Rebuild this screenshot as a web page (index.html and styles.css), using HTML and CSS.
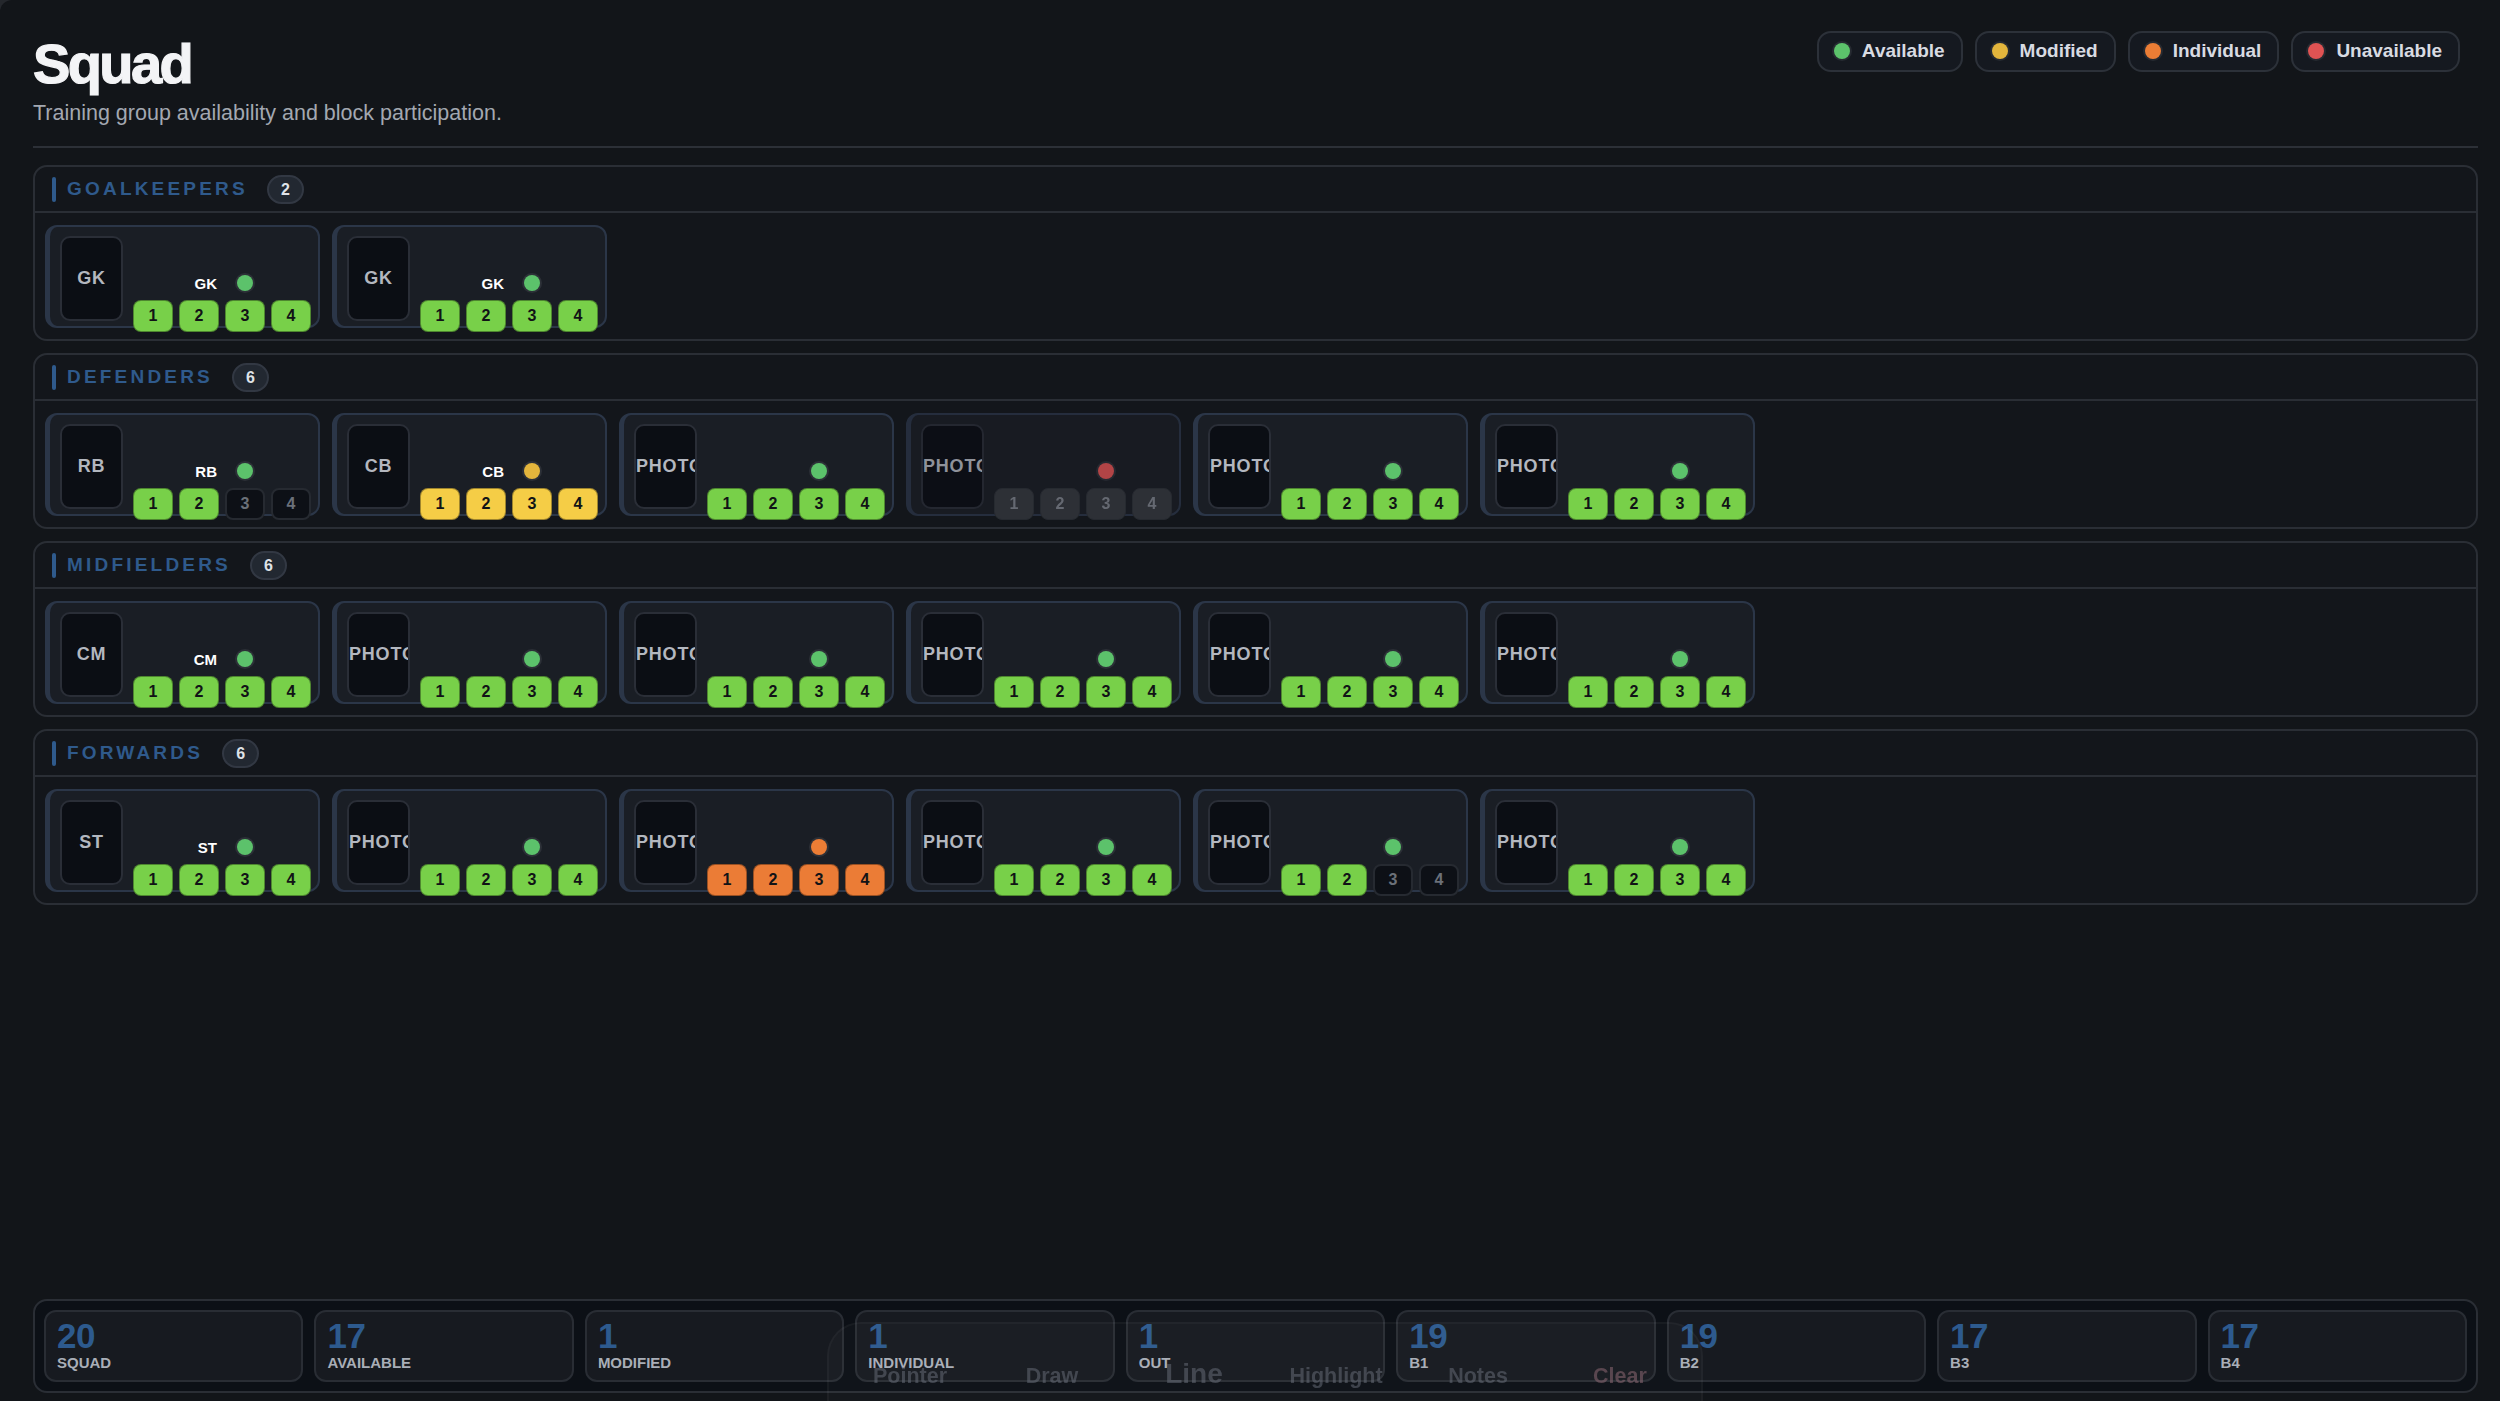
FILE: index.html
```html
<!DOCTYPE html>
<html lang="en">
<head>
    <meta charset="UTF-8">
    <meta name="viewport" content="width=device-width, initial-scale=1.0">
    <title>Squad</title>
    <link rel="stylesheet" href="styles.css">
</head>
<body>
    <div class="app">
        <div class="header">
            <div class="header-text">
                <h1>Squad</h1>
                <p class="subtitle">Training group availability and block participation.</p>
            </div>
            <div class="legend">
                <span class="pill"><span class="dot green"></span>Available</span>
                <span class="pill"><span class="dot yellow"></span>Modified</span>
                <span class="pill"><span class="dot orange"></span>Individual</span>
                <span class="pill"><span class="dot red"></span>Unavailable</span>
            </div>
        </div>

        <div class="groups">
            <div class="group">
                <div class="group-head"><span class="bar"></span><span class="group-title">Goalkeepers</span><span class="count">2</span></div>
                <div class="group-body">
                    <div class="player">
                        <div class="photo">GK</div>
                        <div class="info">
                            <div class="info-top"><span class="pos">GK</span><span class="dot green"></span></div>
                            <div class="blocks"><span class="blk g">1</span><span class="blk g">2</span><span class="blk g">3</span><span class="blk g">4</span></div>
                        </div>
                    </div>
                    <div class="player">
                        <div class="photo">GK</div>
                        <div class="info">
                            <div class="info-top"><span class="pos">GK</span><span class="dot green"></span></div>
                            <div class="blocks"><span class="blk g">1</span><span class="blk g">2</span><span class="blk g">3</span><span class="blk g">4</span></div>
                        </div>
                    </div>
                </div>
            </div>

            <div class="group">
                <div class="group-head"><span class="bar"></span><span class="group-title">Defenders</span><span class="count">6</span></div>
                <div class="group-body">
                    <div class="player">
                        <div class="photo">RB</div>
                        <div class="info">
                            <div class="info-top"><span class="pos">RB</span><span class="dot green"></span></div>
                            <div class="blocks"><span class="blk g">1</span><span class="blk g">2</span><span class="blk off">3</span><span class="blk off">4</span></div>
                        </div>
                    </div>
                    <div class="player">
                        <div class="photo">CB</div>
                        <div class="info">
                            <div class="info-top"><span class="pos">CB</span><span class="dot yellow"></span></div>
                            <div class="blocks"><span class="blk y">1</span><span class="blk y">2</span><span class="blk y">3</span><span class="blk y">4</span></div>
                        </div>
                    </div>
                    <div class="player">
                        <div class="photo">PHOTO</div>
                        <div class="info">
                            <div class="info-top"><span class="dot green"></span></div>
                            <div class="blocks"><span class="blk g">1</span><span class="blk g">2</span><span class="blk g">3</span><span class="blk g">4</span></div>
                        </div>
                    </div>
                    <div class="player out">
                        <div class="photo">PHOTO</div>
                        <div class="info">
                            <div class="info-top"><span class="dot red"></span></div>
                            <div class="blocks"><span class="blk na">1</span><span class="blk na">2</span><span class="blk na">3</span><span class="blk na">4</span></div>
                        </div>
                    </div>
                    <div class="player">
                        <div class="photo">PHOTO</div>
                        <div class="info">
                            <div class="info-top"><span class="dot green"></span></div>
                            <div class="blocks"><span class="blk g">1</span><span class="blk g">2</span><span class="blk g">3</span><span class="blk g">4</span></div>
                        </div>
                    </div>
                    <div class="player">
                        <div class="photo">PHOTO</div>
                        <div class="info">
                            <div class="info-top"><span class="dot green"></span></div>
                            <div class="blocks"><span class="blk g">1</span><span class="blk g">2</span><span class="blk g">3</span><span class="blk g">4</span></div>
                        </div>
                    </div>
                </div>
            </div>

            <div class="group">
                <div class="group-head"><span class="bar"></span><span class="group-title">Midfielders</span><span class="count">6</span></div>
                <div class="group-body">
                    <div class="player">
                        <div class="photo">CM</div>
                        <div class="info">
                            <div class="info-top"><span class="pos">CM</span><span class="dot green"></span></div>
                            <div class="blocks"><span class="blk g">1</span><span class="blk g">2</span><span class="blk g">3</span><span class="blk g">4</span></div>
                        </div>
                    </div>
                    <div class="player">
                        <div class="photo">PHOTO</div>
                        <div class="info">
                            <div class="info-top"><span class="dot green"></span></div>
                            <div class="blocks"><span class="blk g">1</span><span class="blk g">2</span><span class="blk g">3</span><span class="blk g">4</span></div>
                        </div>
                    </div>
                    <div class="player">
                        <div class="photo">PHOTO</div>
                        <div class="info">
                            <div class="info-top"><span class="dot green"></span></div>
                            <div class="blocks"><span class="blk g">1</span><span class="blk g">2</span><span class="blk g">3</span><span class="blk g">4</span></div>
                        </div>
                    </div>
                    <div class="player">
                        <div class="photo">PHOTO</div>
                        <div class="info">
                            <div class="info-top"><span class="dot green"></span></div>
                            <div class="blocks"><span class="blk g">1</span><span class="blk g">2</span><span class="blk g">3</span><span class="blk g">4</span></div>
                        </div>
                    </div>
                    <div class="player">
                        <div class="photo">PHOTO</div>
                        <div class="info">
                            <div class="info-top"><span class="dot green"></span></div>
                            <div class="blocks"><span class="blk g">1</span><span class="blk g">2</span><span class="blk g">3</span><span class="blk g">4</span></div>
                        </div>
                    </div>
                    <div class="player">
                        <div class="photo">PHOTO</div>
                        <div class="info">
                            <div class="info-top"><span class="dot green"></span></div>
                            <div class="blocks"><span class="blk g">1</span><span class="blk g">2</span><span class="blk g">3</span><span class="blk g">4</span></div>
                        </div>
                    </div>
                </div>
            </div>

            <div class="group">
                <div class="group-head"><span class="bar"></span><span class="group-title">Forwards</span><span class="count">6</span></div>
                <div class="group-body">
                    <div class="player">
                        <div class="photo">ST</div>
                        <div class="info">
                            <div class="info-top"><span class="pos">ST</span><span class="dot green"></span></div>
                            <div class="blocks"><span class="blk g">1</span><span class="blk g">2</span><span class="blk g">3</span><span class="blk g">4</span></div>
                        </div>
                    </div>
                    <div class="player">
                        <div class="photo">PHOTO</div>
                        <div class="info">
                            <div class="info-top"><span class="dot green"></span></div>
                            <div class="blocks"><span class="blk g">1</span><span class="blk g">2</span><span class="blk g">3</span><span class="blk g">4</span></div>
                        </div>
                    </div>
                    <div class="player">
                        <div class="photo">PHOTO</div>
                        <div class="info">
                            <div class="info-top"><span class="dot orange"></span></div>
                            <div class="blocks"><span class="blk o">1</span><span class="blk o">2</span><span class="blk o">3</span><span class="blk o">4</span></div>
                        </div>
                    </div>
                    <div class="player">
                        <div class="photo">PHOTO</div>
                        <div class="info">
                            <div class="info-top"><span class="dot green"></span></div>
                            <div class="blocks"><span class="blk g">1</span><span class="blk g">2</span><span class="blk g">3</span><span class="blk g">4</span></div>
                        </div>
                    </div>
                    <div class="player">
                        <div class="photo">PHOTO</div>
                        <div class="info">
                            <div class="info-top"><span class="dot green"></span></div>
                            <div class="blocks"><span class="blk g">1</span><span class="blk g">2</span><span class="blk off">3</span><span class="blk off">4</span></div>
                        </div>
                    </div>
                    <div class="player">
                        <div class="photo">PHOTO</div>
                        <div class="info">
                            <div class="info-top"><span class="dot green"></span></div>
                            <div class="blocks"><span class="blk g">1</span><span class="blk g">2</span><span class="blk g">3</span><span class="blk g">4</span></div>
                        </div>
                    </div>
                </div>
            </div>
        </div>

        <div class="stats">
            <div class="stat"><div class="num">20</div><div class="lbl">Squad</div></div>
            <div class="stat"><div class="num">17</div><div class="lbl">Available</div></div>
            <div class="stat"><div class="num">1</div><div class="lbl">Modified</div></div>
            <div class="stat"><div class="num">1</div><div class="lbl">Individual</div></div>
            <div class="stat"><div class="num">1</div><div class="lbl">Out</div></div>
            <div class="stat"><div class="num">19</div><div class="lbl">B1</div></div>
            <div class="stat"><div class="num">19</div><div class="lbl">B2</div></div>
            <div class="stat"><div class="num">17</div><div class="lbl">B3</div></div>
            <div class="stat"><div class="num">17</div><div class="lbl">B4</div></div>
        </div>
    </div>

    <div class="toolbar">
        <span class="tool">Pointer</span>
        <span class="tool">Draw</span>
        <span class="tool big">Line</span>
        <span class="tool">Highlight</span>
        <span class="tool">Notes</span>
        <span class="tool clear">Clear</span>
    </div>
</body>
</html>
```

FILE: styles.css
```css
body {
    margin: 0;
    background: #24272c;
    font-family: "Liberation Sans", Arial, sans-serif;
    color: #d7dae0;
}
.app {
    min-height: 100vh;
    box-sizing: border-box;
    padding: 31px 22px 8px 33px;
    background: #121519;
    border-top-left-radius: 12px;
    display: flex;
    flex-direction: column;
}
.header {
    display: flex;
    justify-content: space-between;
    align-items: flex-start;
    padding: 0 18px 20px 0;
    border-bottom: 2px solid #2c3037;
}
h1 {
    margin: 5px 0 0;
    font-size: 56px;
    line-height: 56px;
    font-weight: 700;
    letter-spacing: -2.6px;
    color: #f3f4f6;
    -webkit-text-stroke: 1.2px #f3f4f6;
}
.subtitle {
    margin: 8px 0 0;
    font-size: 21.5px;
    line-height: 26px;
    color: #a3a8b1;
}
.legend {
    display: flex;
    gap: 12px;
}
.pill {
    display: flex;
    align-items: center;
    padding: 7px 16px 8px 15px;
    border: 2px solid #2c3139;
    border-radius: 14px;
    background: #151920;
    font-size: 19px;
    line-height: 22px;
    font-weight: 700;
    color: #d8dbe2;
}
.pill .dot {
    margin-right: 12px;
}
.dot {
    display: inline-block;
    width: 16px;
    height: 16px;
    border-radius: 50%;
    box-shadow: 0 0 0 2px #262a31;
}
.green { background: #5cc26b; }
.yellow { background: #e3b53c; }
.orange { background: #eb7d35; }
.red { background: #e05353; }

.groups {
    margin-top: 17px;
    display: flex;
    flex-direction: column;
    gap: 12px;
}
.group {
    border: 2px solid #2a2e35;
    border-radius: 14px;
    background: #13161b;
}
.group-head {
    display: flex;
    align-items: center;
    height: 44px;
    padding-left: 17px;
    border-bottom: 2px solid #2a2e35;
}
.bar {
    width: 4px;
    height: 25px;
    border-radius: 2px;
    background: #2f5a8c;
}
.group-title {
    margin-left: 11px;
    font-size: 19px;
    font-weight: 700;
    letter-spacing: 3.2px;
    text-transform: uppercase;
    color: #2f5a8c;
}
.count {
    margin-left: 19px;
    min-width: 33px;
    height: 25px;
    box-sizing: content-box;
    border: 2px solid #323843;
    border-radius: 15px;
    background: #222831;
    font-size: 16px;
    font-weight: 700;
    line-height: 25px;
    text-align: center;
    color: #dfe2e7;
}
.group-body {
    display: flex;
    gap: 12px;
    padding: 12px 10px 11px;
}

.player {
    width: 275px;
    height: 103px;
    box-sizing: border-box;
    display: flex;
    align-items: flex-start;
    gap: 10px;
    padding: 9px 10px;
    border: 2px solid #2b3648;
    border-left-width: 5px;
    border-radius: 12px;
    background: #1a1e25;
}
.player.out {
    opacity: 0.78;
}
.photo {
    width: 59px;
    height: 81px;
    flex: none;
    border: 2px solid #2a2e37;
    border-radius: 10px;
    background: #0b0e14;
    overflow: hidden;
    white-space: nowrap;
    text-align: center;
    font-size: 18px;
    font-weight: 700;
    letter-spacing: 0.8px;
    line-height: 81px;
    color: #b3b7bf;
}
.info {
    margin-top: 37px;
    width: 178px;
}
.info-top {
    display: flex;
    justify-content: flex-end;
    align-items: center;
    height: 20px;
    padding-right: 58px;
}
.pos {
    margin-right: 20px;
    font-size: 15px;
    font-weight: 700;
    color: #ffffff;
}
.info-top .dot {
    box-shadow: 0 0 0 2px #2c3037;
}
.blocks {
    display: flex;
    gap: 6px;
    margin-top: 7px;
}
.blk {
    width: 40px;
    height: 32px;
    box-sizing: border-box;
    border-radius: 8px;
    border: 1px solid rgba(0, 0, 0, 0.35);
    font-size: 16px;
    font-weight: 700;
    line-height: 30px;
    text-align: center;
    color: #111316;
}
.blk.g { background: #78d049; }
.blk.y { background: #f5cd46; }
.blk.o { background: #eb7c36; }
.blk.na {
    background: #35393f;
    border-color: #2d3137;
    color: #7e838b;
}
.blk.off {
    background: #0d1016;
    border: 2px solid #262a31;
    line-height: 28px;
    color: #6b7079;
}

.stats {
    margin-top: auto;
    display: grid;
    grid-template-columns: repeat(9, 1fr);
    gap: 11px;
    padding: 9px;
    border: 2px solid #2a2e35;
    border-radius: 14px;
    background: #0c1016;
}
.stat {
    height: 72px;
    box-sizing: border-box;
    padding: 6px 11px 0;
    border: 2px solid #292d34;
    border-radius: 12px;
    background: #171a20;
}
.num {
    font-size: 35px;
    line-height: 35px;
    font-weight: 700;
    letter-spacing: -0.5px;
    color: #2d5a8e;
}
.lbl {
    margin-top: 1px;
    font-size: 15px;
    line-height: 18px;
    font-weight: 700;
    text-transform: uppercase;
    color: #a9aeb7;
}

.toolbar {
    position: fixed;
    left: 827px;
    top: 1322px;
    width: 876px;
    height: 120px;
    box-sizing: border-box;
    padding: 38px 10px 0;
    display: flex;
    align-items: baseline;
    border: 2px solid rgba(255, 255, 255, 0.035);
    border-radius: 34px;
    background: rgba(255, 255, 255, 0.018);
}
.tool {
    flex: 1;
    text-align: center;
    font-size: 21.5px;
    line-height: 24px;
    font-weight: 700;
    color: rgba(108, 114, 126, 0.5);
}
.tool.big {
    font-size: 28px;
}
.tool.clear {
    color: rgba(140, 104, 114, 0.55);
}
```
